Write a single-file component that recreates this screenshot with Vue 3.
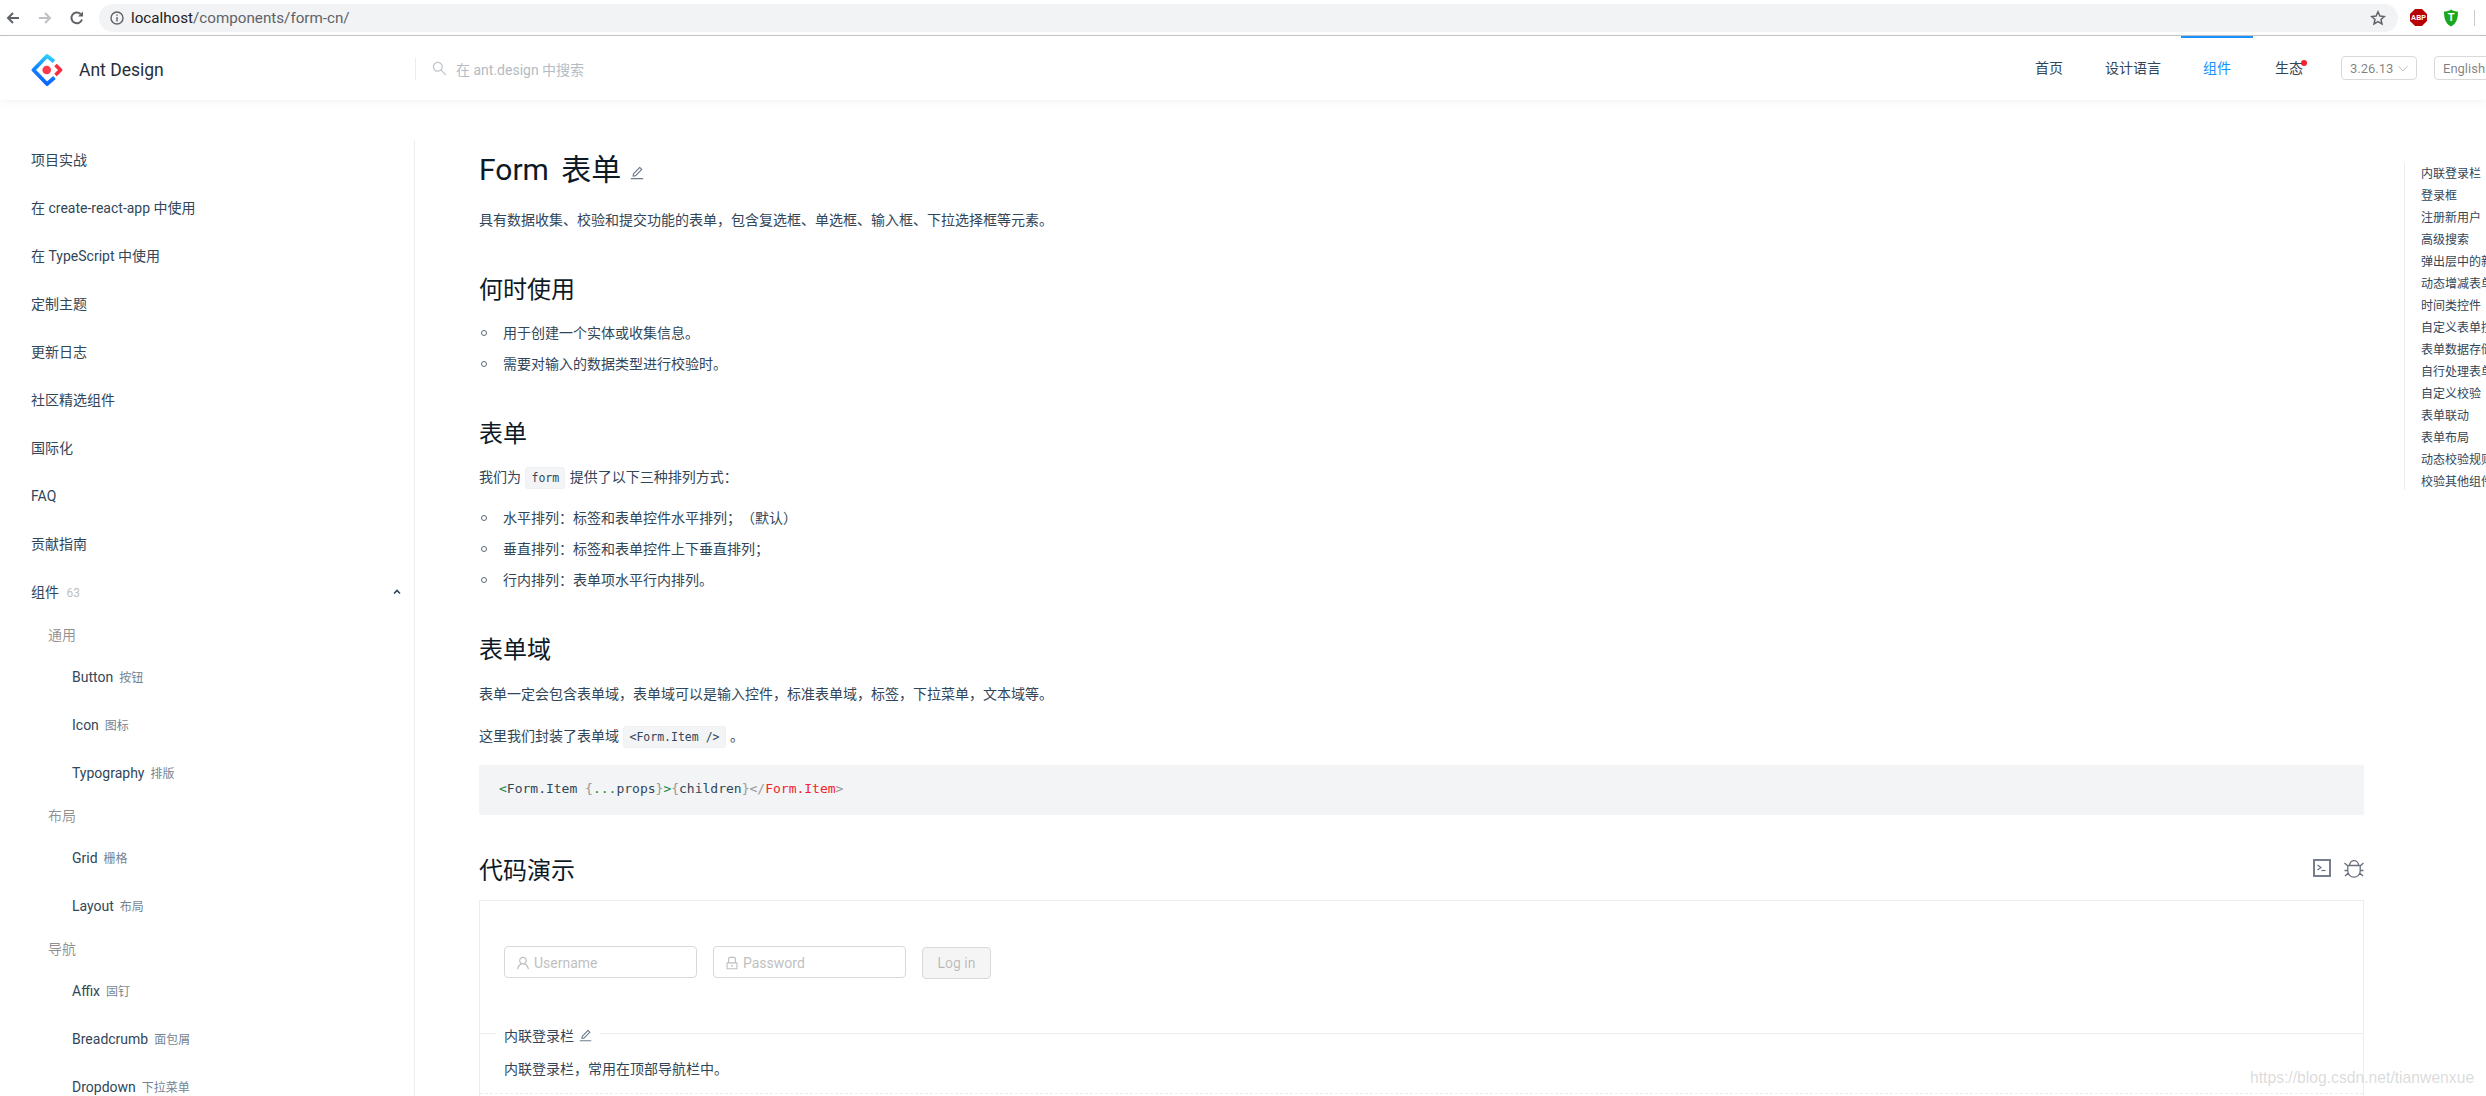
<script setup>
const sideTop = ['项目实战', '在 create-react-app 中使用', '在 TypeScript 中使用', '定制主题', '更新日志', '社区精选组件', '国际化', 'FAQ', '贡献指南']
const groups = [
  { title: '通用', items: [['Button', '按钮'], ['Icon', '图标'], ['Typography', '排版']] },
  { title: '布局', items: [['Grid', '栅格'], ['Layout', '布局']] },
  { title: '导航', items: [['Affix', '固钉'], ['Breadcrumb', '面包屑'], ['Dropdown', '下拉菜单']] },
]
const anchors = ['内联登录栏', '登录框', '注册新用户', '高级搜索', '弹出层中的新表单', '动态增减表单项', '时间类控件', '自定义表单控件', '表单数据存储于上层组件', '自行处理表单数据', '自定义校验', '表单联动', '表单布局', '动态校验规则', '校验其他组件']
const editPath = 'M257.7 752c2 0 4-.2 6-.5L431.9 722c2-.4 3.9-1.3 5.3-2.8l423.9-423.9a9.96 9.96 0 0 0 0-14.1L694.9 114.9c-1.9-1.9-4.4-2.9-7.1-2.9s-5.2 1-7.1 2.9L256.8 538.8c-1.5 1.5-2.4 3.3-2.8 5.3l-29.5 168.2a33.5 33.5 0 0 0 9.4 29.8c6.6 6.4 14.9 9.9 23.8 9.9zm67.4-174.4L687.8 215l73.3 73.3-362.7 362.6-88.9 15.7 15.6-89zM880 836H144c-17.7 0-32 14.3-32 32v36c0 4.4 3.6 8 8 8h784c4.4 0 8-3.6 8-8v-36c0-17.7-14.3-32-32-32z'
const userPath = 'M858.5 763.6a374 374 0 0 0-80.6-119.5 375.63 375.63 0 0 0-119.5-80.6c-.4-.2-.8-.3-1.2-.5C719.5 518 760 444.7 760 362c0-137-111-248-248-248S264 225 264 362c0 82.7 40.5 156 102.8 201.1-.4.2-.8.3-1.2.5-44.8 18.9-85 46-119.5 80.6a375.63 375.63 0 0 0-80.6 119.5A371.7 371.7 0 0 0 136 901.8a8 8 0 0 0 8 8.2h60c4.4 0 7.9-3.5 8-7.8 2-77.2 33-149.5 87.8-204.3 56.7-56.7 132-87.9 212.2-87.9s155.5 31.2 212.2 87.9C779 752.7 810 825 812 902.2c.1 4.4 3.6 7.8 8 7.8h60a8 8 0 0 0 8-8.2c-1-47.8-10.9-94.3-29.5-138.2zM512 534c-45.9 0-89.1-17.9-121.6-50.4S340 407.9 340 362c0-45.9 17.9-89.1 50.4-121.6S466.1 190 512 190s89.1 17.9 121.6 50.4S684 316.1 684 362c0 45.9-17.9 89.1-50.4 121.6S557.9 534 512 534z'
const lockPath = 'M832 464h-68V240c0-70.7-57.3-128-128-128H388c-70.7 0-128 57.3-128 128v224h-68c-17.7 0-32 14.3-32 32v384c0 17.7 14.3 32 32 32h640c17.7 0 32-14.3 32-32V496c0-17.7-14.3-32-32-32zM332 240c0-30.9 25.1-56 56-56h248c30.9 0 56 25.1 56 56v224H332V240zm460 600H232V536h560v304zM484 701v53c0 4.4 3.6 8 8 8h40c4.4 0 8-3.6 8-8v-53a48.01 48.01 0 1 0-56 0z'
const searchPath = 'M909.6 854.5L649.9 594.8C690.2 542.7 712 479 712 412c0-80.2-31.3-155.4-87.9-212.1-56.6-56.7-132-87.9-212.1-87.9s-155.5 31.3-212.1 87.9C143.2 256.5 112 331.8 112 412c0 80.1 31.3 155.5 87.9 212.1C256.5 680.8 331.8 712 412 712c67 0 130.6-21.8 182.7-62l259.7 259.6a8.2 8.2 0 0 0 11.6 0l43.6-43.5a8.2 8.2 0 0 0 0-11.6zM570.4 570.4C528 612.7 471.8 636 412 636s-116-23.3-158.4-65.6C211.3 528 188 471.8 188 412s23.3-116.1 65.6-158.4C296 211.3 352.2 188 412 188s116.1 23.2 158.4 65.6S636 352.2 636 412s-23.3 116.1-65.6 158.4z'
</script>

<template>
  <div class="page">
    <div class="chrome">
      <svg class="c-ico" width="16" height="16" viewBox="0 0 16 16" fill="none" stroke="#5f6368" stroke-width="2"><path d="M14 8H3M8 3 3 8l5 5" /></svg>
      <svg class="c-ico" width="16" height="16" viewBox="0 0 16 16" fill="none" stroke="#bdc1c6" stroke-width="2"><path d="M2 8h11M8 3l5 5-5 5" /></svg>
      <svg class="c-ico" width="16" height="16" viewBox="0 0 16 16" fill="none" stroke="#5f6368" stroke-width="2"><path d="M13 9.5A5.4 5.4 0 1 1 11.6 4" /><path d="M14 1.5V6.5H9" fill="#5f6368" stroke="none" /></svg>
      <div class="pill">
        <svg width="14" height="14" viewBox="0 0 14 14" fill="none" stroke="#5f6368" stroke-width="1.4"><circle cx="7" cy="7" r="6" /><path d="M7 6v4.4M7 3.4v1.4" /></svg>
        <span class="url"><b>localhost</b>/components/form-cn/</span>
        <svg class="star" width="16" height="16" viewBox="0 0 16 16" fill="none" stroke="#5f6368" stroke-width="1.5"><path d="M8 1.8 9.9 6l4.5.5-3.4 3 1 4.500L8 11.700 4 14l1-4.500-3.400-3L6.100 6z" /></svg>
      </div>
      <div class="ext abp">ABP</div>
      <svg class="ext-t" width="16" height="18" viewBox="0 0 16 18"><path d="M8 .5c2 1.500 4.500 2 7 2 0 7-1.500 12-7 15C2.500 14.500 1 9.500 1 2.500c2.500 0 5-.5 7-2z" fill="#18a81e" /><text x="8" y="11.500" text-anchor="middle" class="shield-t">T</text></svg>
      <div class="c-sep"></div>
    </div>

    <header class="head">
      <div class="brand">
        <svg width="32" height="32" viewBox="0 0 32 32" fill="none">
          <defs>
            <linearGradient id="lg1" x1="0.6" y1="0" x2="0.4" y2="1">
              <stop offset="0" stop-color="#29cdff" /><stop offset="0.4" stop-color="#148eff" /><stop offset="1" stop-color="#0a60ff" />
            </linearGradient>
          </defs>
          <path d="M23 7.500 16 2 2.500 16 16 30l7.500-6.500" stroke="url(#lg1)" stroke-width="3.800" stroke-linejoin="round" />
          <path d="M24.500 11 29.500 16l-5 5" stroke="#fa2c3f" stroke-width="3.600" stroke-linejoin="round" />
          <circle cx="15.700" cy="16" r="4.300" fill="#fa3a4a" />
        </svg>
        <span class="brand-name">Ant Design</span>
      </div>
      <div class="search">
        <svg class="search-ico" width="15" height="15" viewBox="64 64 896 896" fill="#c3c8cd"><path :d="searchPath" /></svg>
        <span>在 ant.design 中搜索</span>
      </div>
      <nav class="nav">
        <a class="nav-a tight">首页</a>
        <a class="nav-a tight">设计语言</a>
        <a class="nav-a on">组件</a>
        <a class="nav-a">生态<i class="dot"></i></a>
      </nav>
      <div class="sel ver">3.26.13
        <svg width="10" height="10" viewBox="0 0 10 10" fill="none" stroke="#bfbfbf"><path d="M.5 3 5 8l4.500-5" /></svg>
      </div>
      <div class="sel lang">English</div>
    </header>

    <div class="body">
      <aside class="side">
        <a v-for="t in sideTop" :key="t" class="s-item">{{ t }}</a>
        <div class="s-item">
          <span>组件 <em class="count">63</em></span>
          <svg class="up" width="10" height="10" viewBox="0 0 10 10" fill="none" stroke="#314659" stroke-width="1.600"><path d="M2 6.500 5 3.500l3 3" /></svg>
        </div>
        <section v-for="g in groups" :key="g.title" class="s-group">
          <div class="s-title">{{ g.title }}</div>
          <a v-for="i in g.items" :key="i[0]" class="s-sub">{{ i[0] }}<span class="cn">{{ i[1] }}</span></a>
        </section>
      </aside>

      <main class="main">
        <h1 class="h1">Form <span class="h1-sub">表单</span>
          <svg class="edit" width="14" height="14" viewBox="64 64 896 896" fill="#697b8c"><path :d="editPath" /></svg>
        </h1>
        <p class="p p1">具有数据收集、校验和提交功能的表单，包含复选框、单选框、输入框、下拉选择框等元素。</p>
        <h2 class="h2">何时使用</h2>
        <ul class="ul u1">
          <li>用于创建一个实体或收集信息。</li>
          <li>需要对输入的数据类型进行校验时。</li>
        </ul>
        <h2 class="h2">表单</h2>
        <p class="p p2">我们为 <code class="code">form</code> 提供了以下三种排列方式：</p>
        <ul class="ul u2">
          <li>水平排列：标签和表单控件水平排列；（默认）</li>
          <li>垂直排列：标签和表单控件上下垂直排列；</li>
          <li>行内排列：表单项水平行内排列。</li>
        </ul>
        <h2 class="h2">表单域</h2>
        <p class="p p3">表单一定会包含表单域，表单域可以是输入控件，标准表单域，标签，下拉菜单，文本域等。</p>
        <p class="p p2b">这里我们封装了表单域 <code class="code">&lt;Form.Item /&gt;</code> 。</p>
        <pre class="pre"><span class="g">&lt;</span>Form.Item <span class="m">{</span><span class="g">...</span>props<span class="m">}</span><span class="g">&gt;</span><span class="m">{</span>children<span class="m">}</span><span class="m">&lt;/</span><span class="r">Form.Item</span><span class="m">&gt;</span></pre>
        <div class="demo-head">
          <h2 class="h2 flat">代码演示</h2>
          <div class="tools">
            <svg width="18" height="18" viewBox="0 0 18 18" fill="none" stroke="#697080"><rect x="1" y="1" width="16" height="16" stroke-width="1.800" /><path d="M4.500 6 8 8.500 4.500 11" stroke-width="1.200" /><path d="M8.500 11.500h4" stroke-width="1.200" /></svg>
            <svg width="20" height="20" viewBox="0 0 20 20" fill="none" stroke="#697080" stroke-width="1.300"><path d="M5.500 7.500C5.500 1 14.500 1 14.500 7.500M3.800 7.500h12.400v5.500a6.200 6.200 0 0 1-12.400 0zM.5 5l3.300 3M19.500 5l-3.300 3M.5 12.500h3.300M19.500 12.500h-3.300M1 18l3.300-3M19 18l-3.300-3" /></svg>
          </div>
        </div>
        <div class="card">
          <div class="demo">
            <div class="field">
              <svg width="14" height="14" viewBox="64 64 896 896" fill="#bfbfbf"><path :d="userPath" /></svg>
              <span>Username</span>
            </div>
            <div class="field">
              <svg width="14" height="14" viewBox="64 64 896 896" fill="#bfbfbf"><path :d="lockPath" /></svg>
              <span>Password</span>
            </div>
            <button class="login" type="button">Log in</button>
          </div>
          <div class="meta">
            <div class="meta-title">内联登录栏
              <svg width="13" height="13" viewBox="64 64 896 896" fill="#697b8c"><path :d="editPath" /></svg>
            </div>
            <p class="p meta-desc">内联登录栏，常用在顶部导航栏中。</p>
          </div>
        </div>
      </main>
    </div>

    <ul class="anchor">
      <li v-for="a in anchors" :key="a">{{ a }}</li>
    </ul>
    <div class="mark">https://blog.csdn.net/tianwenxue</div>
  </div>
</template>

<style>
html, body { margin: 0; padding: 0; background: #fff; overflow: hidden; }
</style>

<style scoped>
.page {
  position: relative;
  width: 2486px;
  height: 1096px;
  overflow: hidden;
  background: #fff;
  font-family: Roboto, "Noto Sans CJK SC", sans-serif;
  font-size: 14px;
  color: #314659;
  text-spacing-trim: space-all;
}
.chrome {
  height: 35px;
  border-bottom: 1px solid #b5b5b5;
  display: flex;
  align-items: center;
  padding-left: 5px;
  gap: 16px;
  background: #fff;
}
.c-ico { flex: none; }
.pill {
  flex: none;
  width: 2299px;
  height: 28px;
  margin-left: -2px;
  background: #f1f3f4;
  border-radius: 14px;
  display: flex;
  align-items: center;
  padding-left: 11px;
  box-sizing: border-box;
  gap: 7px;
  color: #5f6368;
}
.url { font-size: 15.200px; flex: 1; }
.url b { font-weight: 400; color: #202124; }
.star { margin-right: 12px; }
.ext {
  flex: none;
}
.abp {
  width: 17px;
  height: 17px;
  margin-left: -4px;
  background: #b80000;
  clip-path: polygon(30% 0, 70% 0, 100% 30%, 100% 70%, 70% 100%, 30% 100%, 0 70%, 0 30%);
  color: #fff;
  font: 700 7px/17px "Liberation Sans", sans-serif;
  text-align: center;
}
.ext-t { margin-left: 0; flex: none; }
.shield-t { font: 700 11px "Liberation Sans", sans-serif; fill: #fff; }
.c-sep { flex: none; width: 1px; height: 16px; background: #ccc; margin-left: -1px; }

.head {
  position: relative;
  z-index: 2;
  height: 64px;
  display: flex;
  align-items: center;
  background: #fff;
  box-shadow: 0 2px 8px rgba(240, 241, 242, 0.8);
}
.brand {
  width: 384px;
  margin: 4px 0 0 31px;
  display: flex;
  align-items: center;
  gap: 16px;
  flex: none;
}
.brand-name { font-size: 17.500px; color: #262f3a; }
.search {
  flex: 1;
  height: 22px;
  margin-top: 2px;
  border-left: 1px solid #ebedf0;
  padding-left: 16px;
  display: flex;
  align-items: center;
  color: #b4bbc2;
  gap: 9px;
}
.search-ico { margin-top: -2px; }
.nav { display: flex; height: 64px; margin-right: 16px; }
.nav-a {
  position: relative;
  display: flex;
  align-items: center;
  padding: 0 22px;
  box-sizing: border-box;
  height: 64px;
  border-top: 2px solid transparent;
  color: #314659;
  padding-bottom: 4px;
}
.nav-a.tight { margin-right: -2px; }
.nav-a.on { border-top-color: #1890ff; color: #1890ff; }
.dot {
  position: absolute;
  right: 18px;
  top: 22px;
  width: 6px;
  height: 6px;
  border-radius: 50%;
  background: #f5222d;
}
.sel {
  flex: none;
  box-sizing: border-box;
  height: 24px;
  border: 1px solid #d9d9d9;
  border-radius: 4px;
  padding: 0 8px;
  display: flex;
  align-items: center;
  font-size: 13px;
  color: rgba(0, 0, 0, 0.5);
}
.ver { width: 76px; justify-content: space-between; }
.lang { width: 70px; margin-left: 17px; margin-right: -18px; }

.body { display: flex; flex: 1; }
.side {
  box-sizing: border-box;
  width: 415px;
  height: 956px;
  margin-top: 40px;
  flex: none;
  border-right: 1px solid #ebedf0;
  padding-left: 31px;
  display: flex;
  flex-direction: column;
  gap: 8px;
  overflow: hidden;
}
.s-item {
  flex: none;
  height: 40px;
  line-height: 40px;
  display: flex;
  justify-content: space-between;
  align-items: center;
  padding-right: 12px;
}
.count { font-style: normal; font-size: 12px; color: #bfbfbf; margin-left: 4px; }
.s-group {
  flex: none;
  display: flex;
  flex-direction: column;
  gap: 8px;
  margin-top: 5px;
  margin-bottom: -8px;
}
.s-group:first-of-type { margin-top: -3px; }
.s-title {
  height: 36px;
  line-height: 36px;
  margin-left: 17px;
  margin-bottom: -4px;
  color: rgba(0, 0, 0, 0.45);
}
.s-sub {
  flex: none;
  height: 40px;
  line-height: 40px;
  margin-left: 41px;
  color: #314659;
}
.cn { font-size: 12px; opacity: 0.67; margin-left: 6px; }

.main { flex: 1; padding: 0 122px 0 64px; min-width: 0; }
.h1 {
  margin: 51px 0 0;
  font-size: 30px;
  font-weight: 400;
  line-height: 38px;
  color: #0d1a26;
}
.h1-sub { margin-left: 5px; }
.edit { margin-left: 9px; }
.p { margin: 0; line-height: 28px; }
.p1 { margin-top: 17px; }
.h2 {
  margin: 40px 0 -1px;
  font-size: 24px;
  font-weight: 400;
  line-height: 32px;
  color: #0d1a26;
}
.h2.flat { margin: 1px 0 -1px; }
.ul { margin: 0; padding: 0 0 0 24px; list-style: none; }
.ul li { position: relative; line-height: 28px; margin-bottom: 3px; }
.ul li:last-child { margin-bottom: 0; }
.ul li::before {
  content: "";
  position: absolute;
  left: -22px;
  top: 11px;
  box-sizing: border-box;
  width: 6px;
  height: 6px;
  border: 1px solid #5b6b7a;
  border-radius: 50%;
}
.u1 { margin-top: 14px; }
.p2 { margin-top: 14px; }
.u2 { margin-top: 13px; }
.p3 { margin-top: 15px; }
.p2b { margin-top: 14px; }
.code {
  display: inline-block;
  height: 22px;
  line-height: 20px;
  box-sizing: border-box;
  margin: 0 1px;
  padding: 0 5px;
  font-family: "DejaVu Sans Mono", monospace;
  font-size: 11.500px;
  background: #f2f4f5;
  border: 1px solid #eef0f1;
  border-radius: 3px;
}
.pre {
  margin: 15px 0 0;
  height: 50px;
  line-height: 48px;
  padding-left: 20px;
  background: #f2f4f5;
  border-radius: 2px;
  font-family: "DejaVu Sans Mono", monospace;
  font-size: 13px;
  color: #314659;
}
.g { color: #1a8a3c; }
.m { color: #999; }
.r { color: #f5222d; }
.demo-head {
  margin-top: 39px;
  display: flex;
  justify-content: space-between;
  align-items: center;
}
.tools { display: flex; align-items: center; gap: 13px; margin-top: -4px; }
.card {
  margin-top: 14px;
  border: 1px solid #ebedf0;
  border-bottom: 0;
  height: 300px;
  box-sizing: border-box;
}
.demo {
  box-sizing: border-box;
  height: 132px;
  padding: 45px 24px 0;
  display: flex;
  align-items: flex-start;
  gap: 16px;
}
.field {
  box-sizing: border-box;
  width: 193px;
  height: 32px;
  border: 1px solid #d9d9d9;
  border-radius: 4px;
  padding: 1px 0 0 11px;
  display: flex;
  align-items: center;
  gap: 4px;
  color: #bfbfbf;
}
.login {
  box-sizing: border-box;
  width: 69px;
  height: 32px;
  margin-top: 1px;
  background: #f5f5f5;
  border: 1px solid #d9d9d9;
  border-radius: 4px;
  font: inherit;
  color: rgba(0, 0, 0, 0.25);
  padding: 0;
}
.meta { border-top: 1px solid #ebedf0; height: 59px; border-bottom: 1px dashed #ebedf0; }
.meta-title {
  display: inline-flex;
  align-items: center;
  gap: 5px;
  height: 22px;
  margin: -10px 0 0 16px;
  padding: 0 8px;
  background: #fff;
  position: relative;
  vertical-align: top;
}
.meta-desc { margin: 5px 0 0 24px; }

.anchor {
  position: absolute;
  left: 2404px;
  top: 163px;
  width: 82px;
  height: 327px;
  box-sizing: border-box;
  margin: 0;
  padding: 0 0 0 16px;
  border-left: 1px solid #ebedf0;
  list-style: none;
  font-size: 12px;
  line-height: 22px;
  overflow: hidden;
  white-space: nowrap;
}
.mark {
  position: absolute;
  left: 2250px;
  top: 1067px;
  font: 15.700px/22px "Liberation Sans", sans-serif;
  color: rgba(120, 120, 120, 0.28);
  white-space: nowrap;
}
</style>
